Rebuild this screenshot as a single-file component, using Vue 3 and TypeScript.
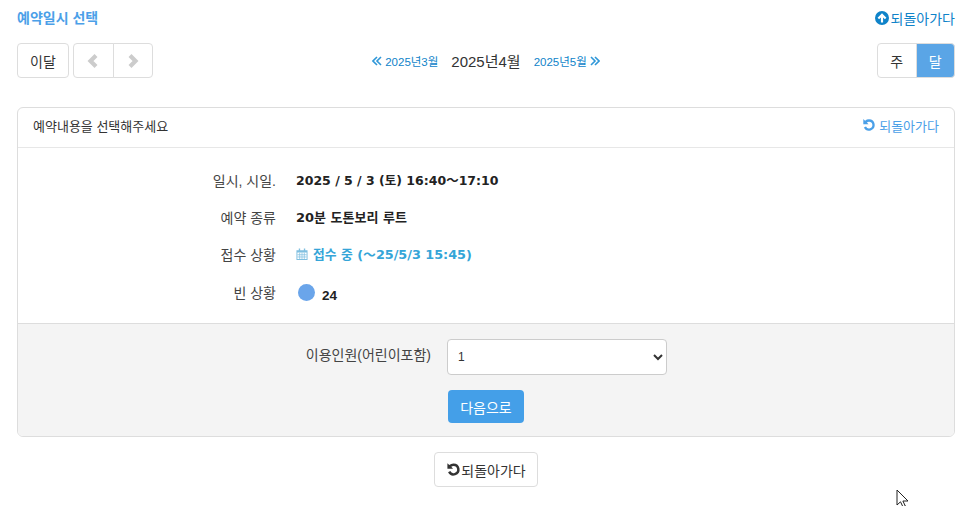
<script setup lang="ts">
const rows = [
  { label: '일시, 시일.', value: '2025 / 5 / 3 (토) 16:40〜17:10', wide: false },
  { label: '예약 종류', value: '20분 도톤보리 루트', wide: true },
]
const undo = 'M8 1.5a6.5 6.5 0 1 1-5.8 9.4l2.400-1.300A3.800 3.800 0 1 0 8 4.200c-.9 0-1.800.3-2.400.9L7.500 7.200H1.500V1.200l2 2A6.500 6.500 0 0 1 8 1.500z'
</script>

<template>
  <div class="page">
    <div class="top">
      <span class="title">예약일시 선택</span>
      <a class="back">
        <svg class="ico16" viewBox="0 0 16 16"><path fill="#0f83c9" d="M8 1a7 7 0 1 0 0 14A7 7 0 0 0 8 1zm0 2.300 4.400 4.400-1.500 1.500-1.800-1.800v5H6.900v-5L5.100 9.200 3.600 7.700z"/></svg>되돌아가다
      </a>
    </div>

    <div class="toolbar">
      <div class="tool-left">
        <button class="btn today">이달</button>
        <div class="group">
          <button class="btn arrow"><svg width="14" height="14" viewBox="0 0 14 14"><path d="M10 1.500 4.500 7l5.500 5.500" fill="none" stroke="#ccc" stroke-width="4.200"/></svg></button>
          <button class="btn arrow"><svg width="14" height="14" viewBox="0 0 14 14"><path d="M4 1.500 9.500 7 4 12.500" fill="none" stroke="#ccc" stroke-width="4.200"/></svg></button>
        </div>
      </div>
      <div class="months">
        <a class="mon"><svg class="dbl" viewBox="0 0 10 10"><path d="M5 1 1 5l4 4M9 1 5 5l4 4" fill="none" stroke="#2f97d8" stroke-width="1.600"/></svg>2025년3월</a>
        <span class="cur">2025년4월</span>
        <a class="mon">2025년5월<svg class="dbl" viewBox="0 0 10 10"><path d="m1 1 4 4-4 4M5 1l4 4-4 4" fill="none" stroke="#2f97d8" stroke-width="1.600"/></svg></a>
      </div>
      <div class="group right">
        <button class="btn view">주</button>
        <button class="btn view on">달</button>
      </div>
    </div>

    <section class="card">
      <header class="card-head">
        <span>예약내용을 선택해주세요</span>
        <a class="back small">
          <svg class="ico14" viewBox="0 0 16 16"><path fill="#4ba0e8" :d="undo"/></svg>되돌아가다
        </a>
      </header>
      <div class="info">
        <div v-for="r in rows" :key="r.label" class="row">
          <span class="lab">{{ r.label }}</span>
          <b class="val" :class="{ wide: r.wide }">{{ r.value }}</b>
        </div>
        <div class="row">
          <span class="lab">접수 상황</span>
          <b class="val open">
            <svg class="ico12" viewBox="0 0 12 13"><path fill="#7fbfe0" d="M0 2.500h12V13H0zM1 5v7h10V5zM2.500.500h1.500V3.500H2.500zM8 .500h1.500V3.500H8z"/><path stroke="#7fbfe0" stroke-width=".8" d="M3.500 5v7M6 5v7M8.500 5v7M1 7.300h10M1 9.700h10"/></svg>
            접수 중 (〜25/5/3 15:45)
          </b>
        </div>
        <div class="row last">
          <span class="lab">빈 상황</span>
          <span class="val seats"><i class="dot"></i><b>24</b></span>
        </div>
      </div>
      <div class="form">
        <div class="form-row">
          <label class="form-lab">이용인원(어린이포함)</label>
          <select class="sel"><option>1</option></select>
        </div>
        <button class="next">다음으로</button>
      </div>
    </section>

    <div class="bottom">
      <button class="btn backbtn"><svg class="ico15" viewBox="0 0 16 16"><path fill="#333" :d="undo"/></svg>되돌아가다</button>
    </div>

    <svg class="cursor" width="13" height="20" viewBox="0 0 13 20"><path d="M1 1v15l3.500-3.200L7 18l2.300-1-2.400-5H12z" fill="#fff" stroke="#222" stroke-width="1"/></svg>
  </div>
</template>

<style scoped>
.page {
  position: relative;
  width: 972px;
  height: 506px;
  box-sizing: border-box;
  padding: 9px 17px 0;
  overflow: hidden;
  background: #fff;
  color: #333;
  font-family: "Liberation Sans", "Noto Sans CJK KR", sans-serif;
  font-size: 14px;
}
.top { display: flex; justify-content: space-between; align-items: center; height: 18px; }
.title { font-weight: 700; color: #4ba0e8; font-size: 14px; margin-bottom: 2px; }
.back { display: flex; align-items: center; gap: 1px; color: #0f83c9; font-size: 14px; }
.back.small { color: #4ba0e8; font-size: 13px; gap: 3px; }
.ico16 { width: 16px; height: 16px; flex: none; }
.ico15 { width: 15px; height: 15px; flex: none; }
.ico14 { width: 14px; height: 14px; flex: none; }
.ico12 { width: 12px; height: 12px; flex: none; }
.toolbar { display: grid; grid-template-columns: 1fr auto 1fr; align-items: center; margin-top: 16px; height: 35px; }
.tool-left { display: flex; gap: 4px; }
.group { display: flex; }
.group.right { justify-content: flex-end; }
.btn {
  box-sizing: border-box;
  height: 35px;
  background: #fff;
  border: 1px solid #ddd;
  border-radius: 4px;
  color: #333;
  font: inherit;
  padding: 0;
  display: flex;
  align-items: center;
  justify-content: center;
}
.today { width: 52px; }
.arrow { width: 40.5px; }
.arrow:first-child { border-radius: 4px 0 0 4px; }
.arrow:last-child { border-radius: 0 4px 4px 0; margin-left: -1px; }
.view { width: 39.5px; }
.view:first-child { border-radius: 4px 0 0 4px; }
.view:last-child { border-radius: 0 4px 4px 0; margin-left: -1px; }
.view.on { background: #5aa5e6; color: #fff; }
.months { display: flex; align-items: center; gap: 13px; }
.mon { display: flex; align-items: center; gap: 3px; color: #0f83c9; font-size: 11.5px; }
.cur { font-size: 15px; color: #333; }
.dbl { width: 10px; height: 10px; }
.card {
  margin-top: 29px;
  border: 1px solid #ddd;
  border-radius: 6px;
  overflow: hidden;
}
.card-head {
  display: flex;
  justify-content: space-between;
  align-items: center;
  height: 40px;
  box-sizing: border-box;
  padding: 0 15px 5px;
  border-bottom: 1px solid #e7e7e7;
  font-size: 13px;
}
.info { padding: 13px 0 0; height: 175px; box-sizing: border-box; }
.row { display: flex; align-items: center; height: 37px; }
.row.last { margin-top: 1px; }
.lab { width: 258px; text-align: right; color: #444; }
.val { margin-left: 20px; color: #222; font-size: 12.5px; font-family: "DejaVu Sans", "Noto Sans CJK KR", sans-serif; }
.val.wide { font-size: 13px; }
.open { color: #35a5d8; display: flex; align-items: center; gap: 5px; font-size: 12.8px; }
.seats { display: flex; align-items: flex-start; gap: 7px; margin-left: 22px; }
.seats b { margin-top: 7px; font-size: 13.5px; font-family: "Liberation Sans", sans-serif; }
.dot { width: 17px; height: 17px; margin-top: 3px; border-radius: 50%; background: #6aa5ea; display: block; }
.form {
  background: #f4f4f4;
  border-top: 1px solid #ddd;
  display: flex;
  flex-direction: column;
  height: 113px;
  box-sizing: border-box;
  padding-top: 15px;
}
.form-row { display: flex; align-items: flex-start; }
.form-lab { width: 413px; text-align: right; padding-top: 5px; color: #444; }
.sel {
  margin-left: 16px;
  width: 220px;
  height: 36px;
  box-sizing: border-box;
  border: 1px solid #ccc;
  border-radius: 4px;
  background: #fff;
  padding: 0 6px;
  font: inherit;
  font-size: 12px;
  color: #333;
}
.next {
  margin: 15px 0 0 430px;
  width: 76px;
  height: 33px;
  border: 0;
  border-radius: 4px;
  background: #449fe8;
  color: #fff;
  font: inherit;
  font-size: 14px;
}
.bottom { display: flex; justify-content: center; margin-top: 15px; }
.backbtn { width: 104px; gap: 0; font-size: 14px; }
.cursor { position: absolute; left: 896px; top: 489px; }
</style>
